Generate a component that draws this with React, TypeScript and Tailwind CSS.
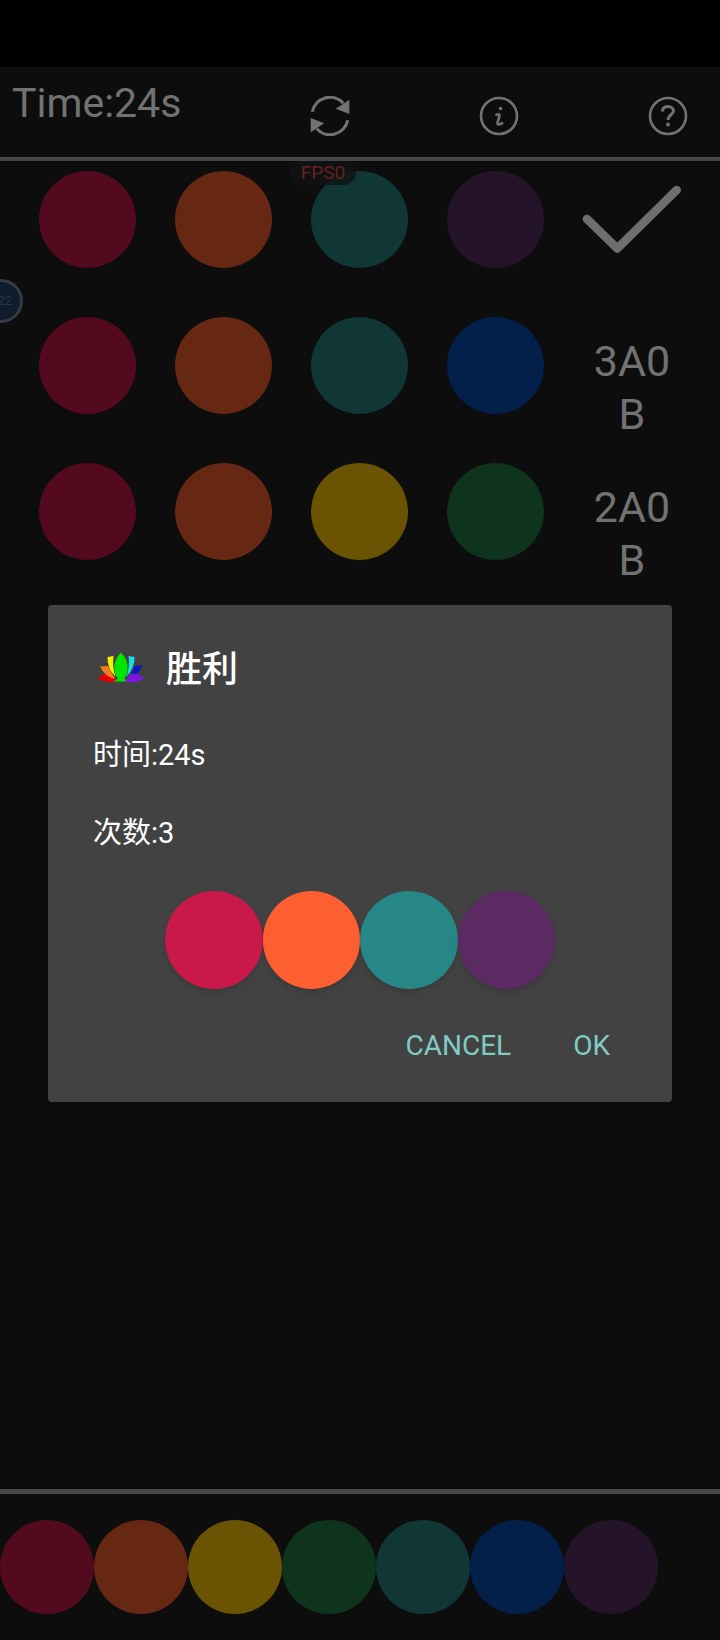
const FONT = "font-['Roboto','Noto_Sans_CJK_SC',sans-serif]";

const ROWS = [
  { colors: ['bg-[#540a1e]', 'bg-[#672813]', 'bg-[#103636]', 'bg-[#25132a]'], result: null },
  { colors: ['bg-[#540a1e]', 'bg-[#672813]', 'bg-[#103636]', 'bg-[#03204a]'], result: ['3A0', 'B'] },
  { colors: ['bg-[#540a1e]', 'bg-[#672813]', 'bg-[#6a5302]', 'bg-[#0e341e]'], result: ['2A0', 'B'] },
];

const PALETTE = [
  'bg-[#540a1e]',
  'bg-[#672813]',
  'bg-[#6a5302]',
  'bg-[#0e341e]',
  'bg-[#103636]',
  'bg-[#03204a]',
  'bg-[#25132a]',
];

const ANSWER = ['bg-[#c9194a]', 'bg-[#fe5f30]', 'bg-[#268786]', 'bg-[#5c2a63]'];

function RefreshIcon() {
  return (
    <svg width="40" height="40" viewBox="0 0 40 40" fill="none" stroke="#727272" strokeWidth="3.2">
      <path d="M2.3 15.7A18 18 0 0 1 33.3 7.3" />
      <path d="M25.7 12.8L39.3 3.7V18Z" fill="#727272" stroke="none" />
      <path d="M37.7 24.3A18 18 0 0 1 6.7 32.7" />
      <path d="M14.3 27.2L0.7 36.3V22Z" fill="#727272" stroke="none" />
    </svg>
  );
}

function InfoIcon() {
  return (
    <svg width="40" height="40" viewBox="0 0 40 40" fill="none" stroke="#727272" strokeWidth="2.6">
      <circle cx="20" cy="20" r="18" />
      <circle cx="21.5" cy="12.5" r="1.8" fill="#727272" stroke="none" />
      <path d="M16.5 19.5C18 18 20.5 17.5 20.5 19.5C20.5 22 18 26 18.5 27.5C19 29 21.5 28.5 24 26.5" />
    </svg>
  );
}

function HelpIcon() {
  return (
    <svg width="40" height="40" viewBox="0 0 40 40" fill="none" stroke="#727272" strokeWidth="2.6">
      <circle cx="20" cy="20" r="18" />
      <path d="M14.5 15.5C14.5 12 17 10.5 20 10.5C23 10.5 25.5 12.5 25.5 15C25.5 18.5 20 19 20 24" strokeWidth="3" />
      <circle cx="20" cy="28.5" r="2" fill="#727272" stroke="none" />
    </svg>
  );
}

function CheckIcon() {
  return (
    <svg width="100" height="72" viewBox="0 0 100 72" fill="none" stroke="#6e6e6e" strokeWidth="8.6" strokeLinecap="round" strokeLinejoin="round">
      <path d="M5 35L35.3 64.5L94.7 6" />
    </svg>
  );
}

function LotusIcon() {
  return (
    <svg width="48" height="32" viewBox="0 0 48 32" className="mb-[4px]">
      <path d="M0.5 26Q9 20 15 22.5L20 29.5Q9 32 0.5 26Z" fill="#e60000" />
      <path d="M3 14.5L11 14Q14 20 18 27Q8 25 3 14.5Z" fill="#f47a20" />
      <path d="M10.5 5L16.5 4Q15 14 18.5 25Q10 16 10.5 5Z" fill="#f5f000" />
      <path d="M24 0.5Q32 9 30.5 18Q30 24 27 26.5Q29 28.5 32 29.5L16 29.5Q19 28.5 21 26.5Q17.5 23 17.5 18Q16 9 24 0.5Z" fill="#00e600" />
      <path d="M31.5 4L37.5 5Q38 15 29.5 25Q33 14 31.5 4Z" fill="#16dfe0" />
      <path d="M37.5 14L45.5 13.5Q41 24 30 27Q36 21 37.5 14Z" fill="#0a14c8" />
      <path d="M47.5 26Q39 20 33 22.5L28 29.5Q39 32 47.5 26Z" fill="#7a18e0" />
    </svg>
  );
}

export default function App() {
  return (
    <div className={`${FONT} relative flex h-[1640px] w-[720px] flex-col overflow-hidden bg-[#0d0d0d]`}>
      <div className="h-[67px] bg-black" />

      <div className="relative flex h-[90px] items-center pl-[310px]">
        <span className="absolute left-[12px] top-[13px] text-[41px] leading-[47px] text-[#727272]">Time:24s</span>
        <div className="flex gap-[129px] pt-[7px]">
          <RefreshIcon />
          <InfoIcon />
          <HelpIcon />
        </div>
      </div>
      <div className="h-[4px] bg-[#464646]" />

      <div className="flex flex-col gap-[48px] pt-[9px]">
        {ROWS.map((row, i) => (
          <div key={i} className="flex h-[98px] items-center">
            <div className="flex gap-[39px] pl-[39px]">
              {row.colors.map((c, j) => (
                <div key={j} className={`h-[97px] w-[97px] rounded-full ${c}`} />
              ))}
            </div>
            {row.result ? (
              <div className="ml-[45px] mt-[19px] w-[86px] self-start text-center text-[43px] leading-[53px] text-[#727272]">
                {row.result.map((t) => (
                  <div key={t}>{t}</div>
                ))}
              </div>
            ) : (
              <div className="ml-[38px] mt-[2px]">
                <CheckIcon />
              </div>
            )}
          </div>
        ))}
      </div>

      <div className="mt-auto h-[5px] bg-[#464646]" />
      <div className="flex pb-[26px] pt-[26px]">
        {PALETTE.map((c) => (
          <div key={c} className={`h-[94px] w-[94px] rounded-full ${c}`} />
        ))}
      </div>

      {/* FPS badge */}
      <div className="absolute left-[290px] top-[161px] flex h-[24px] w-[66px] items-center justify-center rounded-full bg-[#121414]/80 text-[19px] text-[#672020]">
        FPS0
      </div>

      {/* floating bubble at the screen edge */}
      <div className="absolute left-[-21px] top-[279px] flex h-[44px] w-[44px] items-center justify-end rounded-full border-[3px] border-[#333b44] bg-[#101c2e] pr-[8px] text-[13px] text-[#2a3442]">
        22
      </div>

      {/* result dialog */}
      <div className="absolute left-[48px] top-[605px] flex h-[497px] w-[624px] flex-col rounded-[4px] bg-[#424242]">
        <div className="flex items-center pl-[49px] pt-[47px]">
          <LotusIcon />
          <span className="ml-[21px] text-[36px] font-medium leading-[36px] text-white">胜利</span>
        </div>
        <div className="pl-[45px] pt-[49px] text-[29px] leading-[36px] text-white">时间:24s</div>
        <div className="pl-[45px] pt-[42px] text-[29px] leading-[36px] text-white">次数:3</div>
        <div className="flex pl-[117px] pt-[40px]">
          {ANSWER.map((c) => (
            <div key={c} className={`h-[97.5px] w-[97.5px] rounded-full shadow-md ${c}`} />
          ))}
        </div>
        <div className="flex justify-end gap-[62px] pr-[62px] pt-[39px] text-[28px] leading-[36px] text-[#80cbc4]">
          <span>CANCEL</span>
          <span>OK</span>
        </div>
      </div>
    </div>
  );
}
